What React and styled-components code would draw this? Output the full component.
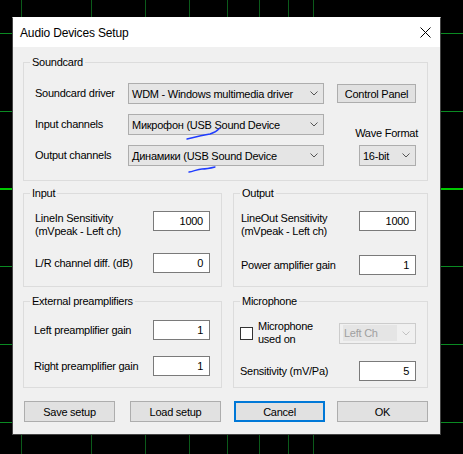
import React from "react";
import styled, { createGlobalStyle } from "styled-components";

const GlobalStyle = createGlobalStyle`
  html, body {
    margin: 0;
    padding: 0;
    background: #000;
  }
  body {
    font-family: "Liberation Sans", Arial, sans-serif;
  }
`;

const Desktop = styled.div`
  position: relative;
  width: 463px;
  height: 454px;
  overflow: hidden;
  background: #000;
`;

const Scope = styled.svg`
  position: absolute;
  left: 0;
  top: 0;
`;

const Ink = styled.svg`
  position: absolute;
  left: 0;
  top: 0;
  pointer-events: none;
`;

const Window = styled.div`
  position: absolute;
  left: 12px;
  top: 17px;
  width: 429px;
  height: 418px;
  box-sizing: border-box;
  border: 1px solid #444;
  border-top-color: #fff;
  background: #f0f0f0;
  display: flex;
  flex-direction: column;
  font-family: "Liberation Sans", Arial, sans-serif;
  font-size: 11px;
  letter-spacing: -0.25px;
  color: #000;
`;

const TitleBar = styled.div`
  height: 29px;
  flex: none;
  background: #fff;
  display: flex;
  align-items: center;
  justify-content: space-between;
  padding-left: 7px;
`;

const Title = styled.div`
  font-size: 12px;
  letter-spacing: -0.15px;
`;

const CloseBox = styled.div`
  width: 30px;
  height: 29px;
  display: flex;
  align-items: center;
  justify-content: center;
`;

const Body = styled.div`
  flex: 1;
  display: flex;
  flex-direction: column;
  padding: 15px 12px 12px 10px;
`;

const Group = styled.div`
  position: relative;
  box-sizing: border-box;
  height: ${(p) => p.$h}px;
  border: 1px solid #dcdcdc;
  padding: ${(p) => p.$pad};
`;

const Legend = styled.span`
  position: absolute;
  top: -7px;
  left: 6px;
  padding: 0 2px;
  line-height: 13px;
  background: #f0f0f0;
`;

const Pair = styled.div`
  display: grid;
  grid-template-columns: 199px 195px;
  column-gap: 11px;
  margin-top: ${(p) => p.$top}px;
`;

const DeviceGrid = styled.div`
  display: grid;
  grid-template-columns: 93px 196px 92px;
  grid-template-rows: repeat(3, 21px);
  row-gap: 10px;
`;

const Label = styled.div`
  line-height: 13px;
  align-self: center;
  white-space: nowrap;
  margin-top: ${(p) => p.$mt || 0}px;
`;

const WaveLabel = styled(Label)`
  grid-column: 3;
  grid-row: 2;
  align-self: end;
  justify-self: end;
  margin-bottom: -5px;
  margin-right: -2px;
`;

const Combo = styled.div`
  box-sizing: border-box;
  height: 21px;
  width: ${(p) => (p.$w ? `${p.$w}px` : "auto")};
  justify-self: ${(p) => (p.$w ? "end" : "stretch")};
  border: 1px solid ${(p) => (p.$disabled ? "#cccccc" : "#adadad")};
  background: ${(p) => (p.$disabled ? "#f0f0f0" : "#e5e5e5")};
  display: flex;
  align-items: center;
  justify-content: space-between;
  padding: 0 5px 0 3px;
  color: ${(p) => (p.$disabled ? "#a0a0a0" : "#000")};
  white-space: nowrap;
  overflow: hidden;
  margin-left: ${(p) => (p.$auto ? "auto" : "0")};
`;

const ComboText = styled.span`
  padding: 2px 1px;
  background: ${(p) => (p.$hl ? "#e5e5e5" : "transparent")};
  flex: ${(p) => (p.$hl ? "1" : "none")};
  margin-right: ${(p) => (p.$hl ? "5px" : "0")};
`;

const Button = styled.div`
  box-sizing: border-box;
  width: ${(p) => p.$w || 91}px;
  height: ${(p) => p.$h || 21}px;
  align-self: center;
  justify-self: end;
  margin-left: ${(p) => p.$ml || 0}px;
  background: #e1e1e1;
  border: ${(p) => (p.$focus ? "2px solid #0078d7" : "1px solid #adadad")};
  display: flex;
  align-items: center;
  justify-content: center;
  white-space: nowrap;
`;

const Stack = styled.div`
  display: flex;
  flex-direction: column;
  gap: ${(p) => p.$gap}px;
`;

const Row = styled.div`
  display: flex;
  justify-content: space-between;
  align-items: ${(p) => p.$align || "center"};
`;

const Field = styled.div`
  box-sizing: border-box;
  width: 57px;
  height: 20px;
  flex: none;
  background: #fff;
  border: 1px solid #7a7a7a;
  display: flex;
  align-items: center;
  justify-content: flex-end;
  padding-right: 6px;
`;

const CheckRow = styled.div`
  display: flex;
  align-items: center;
`;

const Check = styled.div`
  box-sizing: border-box;
  width: 13px;
  height: 13px;
  background: #fff;
  border: 1px solid #333;
  flex: none;
`;

const CheckLabel = styled(Label)`
  margin-left: 5px;
`;

const ButtonBar = styled.div`
  display: flex;
  margin-top: 13px;
`;

const Chevron = ({ color = "#555" }) => (
  <svg width="8" height="5" viewBox="0 0 8 5">
    <polyline points="0.5,0.5 4,4 7.5,0.5" fill="none" stroke={color} strokeWidth="1" />
  </svg>
);

const verticals = [21, 91, 145, 189, 227, 259, 288, 313];
const horizontals = [33, 111, 266, 344, 422];

function ScopeGrid() {
  return (
    <Scope width="463" height="454">
      {verticals.map((x) => (
        <rect key={"v" + x} x={x} y="0" width="1" height="454" fill="#0b5a1a" />
      ))}
      {horizontals.map((y) => (
        <rect key={"h" + y} x="0" y={y} width="463" height="1" fill="#0a8a22" />
      ))}
      <rect x="0" y="188" width="463" height="2" fill="#00c800" />
    </Scope>
  );
}

export default function App() {
  return (
    <>
      <GlobalStyle />
      <Desktop>
        <ScopeGrid />
        <Window>
          <TitleBar>
            <Title>Audio Devices Setup</Title>
            <CloseBox>
              <svg width="11" height="11" viewBox="0 0 11 11">
                <path d="M0.5 0.5 L10.5 10.5 M10.5 0.5 L0.5 10.5" stroke="#000" strokeWidth="1" />
              </svg>
            </CloseBox>
          </TitleBar>
          <Body>
            <Group $h={119} $pad="20px 0 0 11px">
              <Legend>Soundcard</Legend>
              <DeviceGrid>
                <Label>Soundcard driver</Label>
                <Combo>
                  <span>WDM - Windows multimedia driver</span>
                  <Chevron />
                </Combo>
                <Button $w={79} $h={19}>Control Panel</Button>
                <Label>Input channels</Label>
                <Combo>
                  <span>Микрофон (USB Sound Device</span>
                  <Chevron />
                </Combo>
                <WaveLabel>Wave Format</WaveLabel>
                <Label>Output channels</Label>
                <Combo>
                  <span>Динамики (USB Sound Device</span>
                  <Chevron />
                </Combo>
                <Combo $w={57}>
                  <span>16-bit</span>
                  <Chevron />
                </Combo>
              </DeviceGrid>
            </Group>

            <Pair $top={12}>
              <Group $h={94} $pad="17px 11px 0 11px">
                <Legend>Input</Legend>
                <Stack $gap={15}>
                  <Row $align="flex-start">
                    <Label $mt={1}>
                      LineIn Sensitivity
                      <br />
                      (mVpeak - Left ch)
                    </Label>
                    <Field>1000</Field>
                  </Row>
                  <Row>
                    <Label>L/R channel diff. (dB)</Label>
                    <Field>0</Field>
                  </Row>
                </Stack>
              </Group>
              <Group $h={94} $pad="17px 11px 0 7px">
                <Legend>Output</Legend>
                <Stack $gap={17}>
                  <Row $align="flex-start">
                    <Label $mt={1}>
                      LineOut Sensitivity
                      <br />
                      (mVpeak - Left ch)
                    </Label>
                    <Field>1000</Field>
                  </Row>
                  <Row>
                    <Label>Power amplifier gain</Label>
                    <Field>1</Field>
                  </Row>
                </Stack>
              </Group>
            </Pair>

            <Pair $top={14}>
              <Group $h={87} $pad="18px 11px 0 10px">
                <Legend>External preamplifiers</Legend>
                <Stack $gap={16}>
                  <Row>
                    <Label>Left preamplifier gain</Label>
                    <Field>1</Field>
                  </Row>
                  <Row>
                    <Label>Right preamplifier gain</Label>
                    <Field>1</Field>
                  </Row>
                </Stack>
              </Group>
              <Group $h={87} $pad="18px 11px 0 6px">
                <Legend>Microphone</Legend>
                <Stack $gap={15}>
                  <CheckRow>
                    <Check />
                    <CheckLabel>
                      Microphone
                      <br />
                      used on
                    </CheckLabel>
                    <Combo $w={77} $disabled $auto>
                      <ComboText $hl>Left Ch</ComboText>
                      <Chevron color="#c2c2c2" />
                    </Combo>
                  </CheckRow>
                  <Row>
                    <Label>Sensitivity (mV/Pa)</Label>
                    <Field>5</Field>
                  </Row>
                </Stack>
              </Group>
            </Pair>

            <ButtonBar>
              <Button $ml={1}>Save setup</Button>
              <Button $ml={15}>Load setup</Button>
              <Button $ml={13} $focus>Cancel</Button>
              <Button $ml={12}>OK</Button>
            </ButtonBar>
          </Body>
        </Window>
        <Ink width="463" height="454">
          <path
            d="M187 139 C 195 137, 203 135, 210 134 C 214 133, 217 131, 220 128"
            fill="none"
            stroke="#1f3cff"
            strokeWidth="1.3"
            strokeLinecap="round"
          />
          <path
            d="M189 172 C 194 171, 198 169, 202 169 C 207 169, 211 168, 215 167"
            fill="none"
            stroke="#1f3cff"
            strokeWidth="1.3"
            strokeLinecap="round"
          />
        </Ink>
      </Desktop>
    </>
  );
}
